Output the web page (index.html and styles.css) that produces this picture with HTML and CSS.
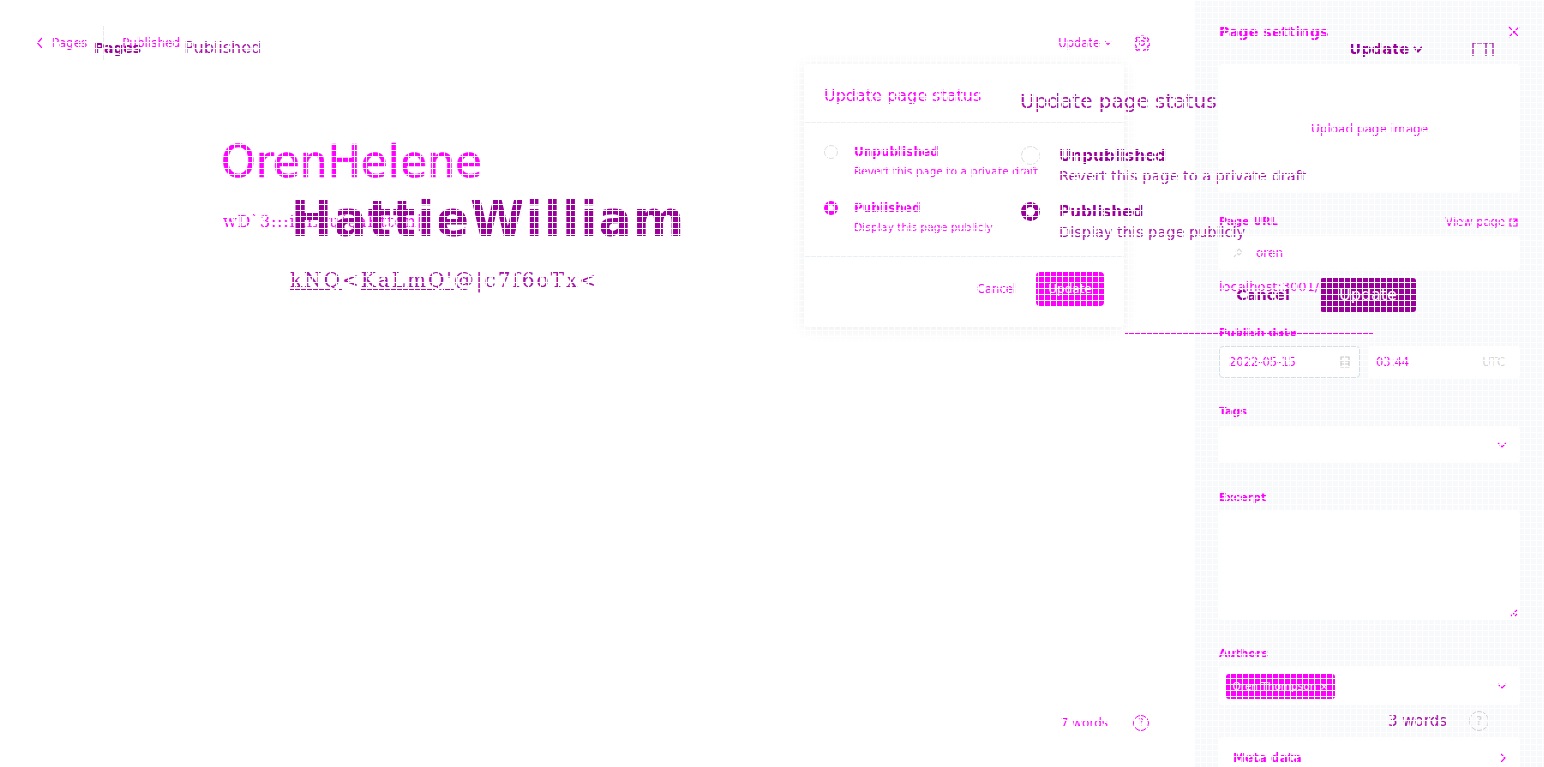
FILE: index.html
```html
<!DOCTYPE html>
<html>
<head>
  <title>Page settings</title>
  <meta charset="UTF-8">
  <link rel="stylesheet" href="styles.css">
</head>
<body>

<div class="app">
  <main class="editor">
    <header class="topbar">
      <nav class="crumbs">
        <svg class="crumb-back" width="8" height="12" viewBox="0 0 8 12"><path d="M6 1 1.500 6 6 11"/></svg>
        <a href="#" class="crumb-link">Pages</a>
        <span class="crumb-line"></span>
        <span class="crumb-status">Published</span>
      </nav>
      <div class="top-actions">
        <a href="#" class="update-link">Update
          <svg width="8" height="6" viewBox="0 0 8 6"><path d="M1 1.500 4 4.500 7 1.500"/></svg>
        </a>
        <svg class="gear" width="16" height="16" viewBox="0 0 16 16"><circle cx="8" cy="8" r="2.400"/><path d="M6.700 1h2.600l.4 1.900 1.400.6 1.700-1 1.800 1.800-1 1.700.6 1.400 1.800.4v2.400l-1.800.4-.6 1.400 1 1.700-1.800 1.800-1.700-1-1.400.6-.4 1.900H6.700l-.4-1.900-1.400-.6-1.700 1-1.800-1.800 1-1.700-.6-1.400L.5 9.200V6.800l1.800-.4.6-1.400-1-1.700 1.800-1.800 1.700 1 1.400-.6z"/></svg>
      </div>
    </header>

    <section class="page-body">
      <h1 class="page-title">OrenHelene</h1>
      <p class="page-text">wD`3:::inLuu(caKttdn|</p>
    </section>

    <footer class="word-count">
      <span>7 words</span>
      <span class="help">?</span>
    </footer>
  </main>

  <aside class="settings">
    <div class="settings-head">
      <h2>Page settings</h2>
      <svg width="12" height="12" viewBox="0 0 12 12"><path d="M1 1 11 11M11 1 1 11"/></svg>
    </div>

    <div class="upload-box"><a href="#">Upload page image</a></div>

    <div class="label-row url-label">
      <label>Page URL</label>
      <a href="#">View page
        <svg width="9" height="9" viewBox="0 0 9 9"><path d="M1 1h7v7H1zM4 5l4-4"/></svg>
      </a>
    </div>
    <div class="field url-field">
      <svg width="12" height="12" viewBox="0 0 12 12"><path d="M2 10 5 7M7 2l3 3-3 3-3-3z"/></svg>
      <span>oren</span>
    </div>
    <p class="url-hint">localhost:3001/o</p>

    <label class="date-label">Publish date</label>
    <div class="date-row">
      <div class="field date-field">
        <span>2022-05-15</span>
        <svg width="10" height="14" viewBox="0 0 10 14"><path d="M1 2h8v10H1zM1 6h8M1 9h8"/></svg>
      </div>
      <div class="field time-field">
        <span>03:44</span>
        <span class="utc">UTC</span>
      </div>
    </div>

    <label class="tags-label">Tags</label>
    <div class="field tags-field">
      <svg width="10" height="6" viewBox="0 0 10 6"><path d="M1 1 5 5 9 1"/></svg>
    </div>

    <label class="excerpt-label">Excerpt</label>
    <div class="field excerpt-field">
      <svg width="8" height="8" viewBox="0 0 8 8"><path d="M1 7 7 1M5 7 7 5"/></svg>
    </div>

    <label class="authors-label">Authors</label>
    <div class="field authors-field">
      <span class="chip">Oren Thompson ×</span>
      <svg width="10" height="6" viewBox="0 0 10 6"><path d="M1 1 5 5 9 1"/></svg>
    </div>

    <div class="meta-card">
      <span>Meta data</span>
      <svg width="6" height="10" viewBox="0 0 6 10"><path d="M1 1 5 5 1 9"/></svg>
    </div>
  </aside>
</div>

<div class="status-dialog">
  <h3>Update page status</h3>
  <div class="status-options">
    <div class="status-option">
      <span class="radio"></span>
      <div>
        <strong>Unpublished</strong>
        <p>Revert this page to a private draft</p>
      </div>
    </div>
    <div class="status-option">
      <span class="radio checked"></span>
      <div>
        <strong>Published</strong>
        <p>Display this page publicly</p>
      </div>
    </div>
  </div>
  <div class="status-foot">
    <a href="#">Cancel</a>
    <button class="btn-update">Update</button>
  </div>
</div>

<!-- second layer, shifted over the first -->
<div class="ghost ghost-crumbs">
  <strong>Pages</strong>
  <span>Published</span>
</div>
<h1 class="ghost ghost-title">HattieWilliam</h1>
<p class="ghost ghost-text"><u>kNQ</u>&lt;<u>KaLmQ'</u>@|c7f6oTx&lt;</p>
<div class="ghost ghost-actions">
  <strong>Update
    <svg width="10" height="7" viewBox="0 0 10 7"><path d="M1 1 5 5.500 9 1"/></svg>
  </strong>
  <svg width="22" height="14" viewBox="0 0 22 14"><path d="M1 14V1h20v13M14 1v13"/></svg>
</div>
<div class="ghost ghost-dialog">
  <h3>Update page status</h3>
  <div class="ghost-option">
    <span class="ghost-radio"></span>
    <div>
      <strong>Unpublished</strong>
      <p>Revert this page to a private draft</p>
    </div>
  </div>
  <div class="ghost-option">
    <span class="ghost-radio checked"></span>
    <div>
      <strong>Published</strong>
      <p>Display this page publicly</p>
    </div>
  </div>
  <div class="ghost-foot">
    <strong>Cancel</strong>
    <span class="ghost-btn">Update</span>
  </div>
</div>
<div class="ghost ghost-words">
  <span>3 words</span>
  <span class="ghost-help">?</span>
</div>

<div class="rule-line"></div>
<div class="mesh"></div>

</body>
</html>
```

FILE: styles.css
```css
body {
  margin: 0;
  height: 767px;
  overflow: hidden;
  position: relative;
  background-color: white;
  font-family: "DejaVu Sans", sans-serif;
  color: #ff00ff;
}

h1, h2, h3, p {
  margin: 0;
}

a {
  color: #ff00ff;
  text-decoration: none;
}

svg {
  fill: none;
  stroke: #ff00ff;
  stroke-width: 1.2;
  flex-shrink: 0;
}

.app {
  display: flex;
  height: 767px;
}

/* left side */
.editor {
  flex: 1;
  display: flex;
  flex-direction: column;
}

.topbar {
  display: flex;
  justify-content: space-between;
  align-items: center;
  height: 36px;
  padding: 25px 45px 0 36px;
}

.crumbs {
  display: flex;
  align-items: center;
  font-size: 12px;
}

.crumb-link {
  margin-left: 8px;
}

.crumb-line {
  width: 1px;
  height: 35px;
  background-color: #e6e9ee;
  margin: 0 18px 0 16px;
}

.top-actions {
  display: flex;
  align-items: center;
  gap: 22px;
  font-size: 11.500px;
}

.update-link {
  display: flex;
  align-items: center;
  gap: 4px;
}

.page-body {
  flex: 1;
  padding: 75px 0 0 221px;
}

.page-title {
  font-size: 44px;
  line-height: 52px;
  font-weight: 400;
  -webkit-text-stroke: 0.6px #ff00ff;
}

.page-text {
  margin-top: 24px;
  font-family: "DejaVu Serif", serif;
  font-size: 16px;
  line-height: 20px;
  letter-spacing: 0.8px;
  padding-left: 2px;
}

.word-count {
  display: flex;
  justify-content: flex-end;
  align-items: center;
  gap: 25px;
  padding: 0 46px 36px 0;
  font-size: 12px;
}

.help {
  width: 14px;
  height: 14px;
  border: 1px solid #ff00ff;
  border-radius: 50%;
  font-size: 10px;
  line-height: 14px;
  text-align: center;
}

/* settings panel */
.settings {
  width: 301px;
  padding: 0 24px;
  background-color: #f8f9fb;
  font-size: 11px;
  line-height: 16px;
  overflow: hidden;
}

.settings label {
  display: block;
  font-weight: 700;
}

.settings-head {
  display: flex;
  justify-content: space-between;
  align-items: center;
  padding-top: 22px;
  height: 20px;
}

.settings-head h2 {
  font-size: 14.200px;
  font-weight: 700;
}

.upload-box {
  display: flex;
  justify-content: center;
  align-items: center;
  height: 128px;
  margin-top: 22px;
  padding-top: 1px;
  background-color: white;
  border-radius: 4px;
  font-size: 12px;
}

.label-row {
  display: flex;
  justify-content: space-between;
}

.label-row a {
  display: flex;
  align-items: center;
  gap: 4px;
  margin-right: 2px;
  font-size: 11.500px;
}

.url-label {
  margin-top: 21px;
}

.field {
  display: flex;
  align-items: center;
  background-color: white;
  border-radius: 4px;
  box-sizing: border-box;
}

.url-field {
  height: 34px;
  margin-top: 6px;
  padding-left: 13px;
  gap: 12px;
  font-size: 12px;
}

.url-field svg {
  stroke: #d8d8d8;
}

.url-hint {
  margin-top: 9px;
  height: 16px;
  font-size: 13px;
  overflow: hidden;
}

.date-label {
  margin-top: 30px;
}

.date-row {
  display: flex;
  gap: 8px;
  margin-top: 5px;
}

.date-field {
  width: 141px;
  height: 32px;
  padding: 0 10px 0 9px;
  justify-content: space-between;
  border: 1px solid #d5dfe6;
  font-size: 11.500px;
}

.date-field svg {
  stroke: #c8c8c8;
  margin-right: -1px;
}

.time-field {
  flex: 1;
  height: 32px;
  padding: 0 15px 0 8px;
  justify-content: space-between;
  font-size: 11.500px;
}

.utc {
  color: #d6d6d6;
}

.tags-label {
  margin-top: 26px;
}

.tags-field {
  height: 36px;
  margin-top: 7px;
  padding-right: 13px;
  justify-content: flex-end;
}

.excerpt-label {
  margin-top: 27px;
}

.excerpt-field {
  height: 109px;
  margin-top: 5px;
  padding: 0 2px 3px 0;
  justify-content: flex-end;
  align-items: flex-end;
}

.authors-label {
  margin-top: 26px;
}

.authors-field {
  height: 38px;
  margin-top: 5px;
  padding: 0 13px 0 7px;
  justify-content: space-between;
}

.chip {
  width: 109px;
  height: 25px;
  background-color: #ff00ff;
  color: white;
  border-radius: 3px;
  font-size: 10.500px;
  line-height: 25px;
  text-align: center;
  white-space: nowrap;
  overflow: hidden;
}

.meta-card {
  display: flex;
  justify-content: space-between;
  align-items: center;
  height: 42px;
  margin-top: 32px;
  padding: 0 14px;
  background-color: white;
  font-weight: 700;
  font-size: 12px;
  border-radius: 4px;
}

/* popup over the editor */
.status-dialog {
  position: absolute;
  left: 804px;
  top: 64px;
  width: 320px;
  height: 263px;
  background-color: white;
  border-radius: 4px;
  box-shadow: 0 2px 14px rgba(60, 70, 90, 0.1);
}

.status-dialog h3 {
  height: 59px;
  padding-left: 20px;
  font-size: 16px;
  line-height: 64px;
  font-weight: 400;
  border-bottom: 1px solid #e9eff4;
  box-sizing: border-box;
}

.status-options {
  display: flex;
  flex-direction: column;
  gap: 20px;
  height: 134px;
  padding: 21px 20px 0;
  box-sizing: border-box;
  border-bottom: 1px solid #e9eff4;
}

.status-option {
  display: flex;
  gap: 16px;
}

.status-option strong {
  display: block;
  font-size: 12px;
  line-height: 16px;
  font-weight: 700;
}

.status-option p {
  margin-top: 4px;
  font-size: 10.800px;
  line-height: 16px;
  white-space: nowrap;
}

.radio {
  width: 14px;
  height: 14px;
  margin-top: 1px;
  border: 1px solid #dedede;
  border-radius: 50%;
  box-sizing: border-box;
}

.radio.checked {
  border: 4px solid #ff00ff;
}

.status-foot {
  display: flex;
  justify-content: flex-end;
  align-items: center;
  gap: 20px;
  padding: 15px 20px 0;
  font-size: 11.500px;
}

.btn-update {
  width: 68px;
  height: 34px;
  border: none;
  border-radius: 4px;
  background-color: #ff00ff;
  color: white;
  font-family: inherit;
  font-size: 12px;
}

/* second layer */
.ghost {
  position: absolute;
  margin: 0;
  color: #a811a8;
}

.ghost svg {
  stroke: #990099;
}

.ghost-crumbs {
  left: 94px;
  top: 39px;
  display: flex;
  gap: 43px;
  font-size: 16px;
  line-height: 18px;
}

.ghost-crumbs strong {
  font-size: 14px;
  color: #990099;
}

.ghost-title {
  left: 291px;
  top: 191px;
  font-size: 49px;
  line-height: 58px;
  font-weight: 700;
  letter-spacing: 1.400px;
  color: #990099;
}

.ghost-text {
  left: 290px;
  top: 268px;
  font-family: "DejaVu Serif", serif;
  font-size: 20px;
  line-height: 24px;
  letter-spacing: 2px;
}

.ghost-actions {
  left: 1349px;
  top: 41px;
  display: flex;
  align-items: center;
  gap: 49px;
  font-size: 14.800px;
  line-height: 16px;
  color: #990099;
}

.ghost-actions strong {
  display: flex;
  align-items: center;
  gap: 4px;
}

.ghost-actions strong svg {
  stroke-width: 2;
}

.ghost-dialog {
  left: 1020px;
  top: 90px;
  width: 396px;
}

.ghost-dialog h3 {
  font-size: 20px;
  line-height: 22px;
  font-weight: 400;
}

.ghost-option {
  display: flex;
  gap: 19px;
  margin-bottom: 18px;
}

.ghost-dialog h3 + .ghost-option {
  margin-top: 35px;
}

.ghost-option strong {
  display: block;
  font-size: 15.200px;
  line-height: 18px;
  color: #990099;
}

.ghost-option p {
  margin-top: 2px;
  font-size: 14.500px;
  line-height: 18px;
  white-space: nowrap;
}

.ghost-radio {
  width: 19px;
  height: 19px;
  margin-top: -1px;
  margin-left: 1px;
  border: 1px solid #dedede;
  border-radius: 50%;
  box-sizing: border-box;
}

.ghost-radio.checked {
  border: 5px solid #990099;
}

.ghost-foot {
  display: flex;
  justify-content: flex-end;
  align-items: center;
  gap: 30px;
  margin-top: 37px;
  font-size: 14.400px;
  color: #990099;
}

.ghost-btn {
  width: 96px;
  height: 34px;
  border-radius: 3px;
  background-color: #990099;
  color: white;
  font-size: 16px;
  line-height: 34px;
  text-align: center;
}

.ghost-words {
  left: 1388px;
  top: 711px;
  display: flex;
  align-items: center;
  gap: 22px;
  font-size: 15px;
  line-height: 18px;
}

.ghost-help {
  width: 18px;
  height: 18px;
  border: 1px solid #cfcfcf;
  border-radius: 50%;
  color: #cfcfcf;
  font-size: 12px;
  line-height: 18px;
  text-align: center;
}

.rule-line {
  position: absolute;
  left: 1125px;
  top: 333px;
  width: 248px;
  height: 1px;
  background-color: #ff00ff;
}

/* white 6px mesh over the whole page */
.mesh {
  position: absolute;
  top: 0;
  left: 0;
  right: 0;
  bottom: 0;
  pointer-events: none;
  background-image:
    linear-gradient(90deg, white 1px, transparent 1px),
    linear-gradient(white 1px, transparent 1px);
  background-size: 6px 6px;
}
```
